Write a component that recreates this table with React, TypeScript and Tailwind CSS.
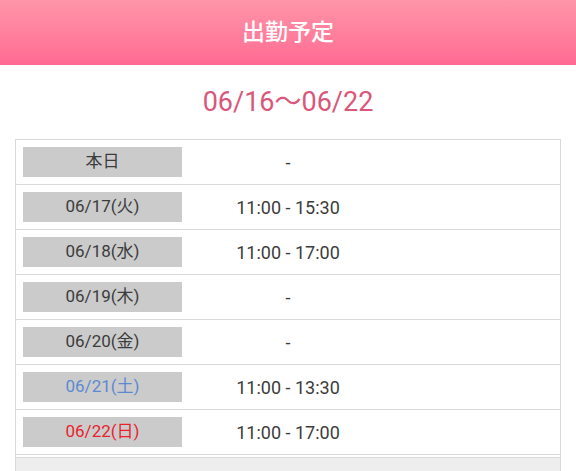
const rows = [
  { label: '本日', time: '-', tone: 'text-[#3c3c3c]' },
  { label: '06/17(火)', time: '11:00 - 15:30', tone: 'text-[#3c3c3c]' },
  { label: '06/18(水)', time: '11:00 - 17:00', tone: 'text-[#3c3c3c]' },
  { label: '06/19(木)', time: '-', tone: 'text-[#3c3c3c]' },
  { label: '06/20(金)', time: '-', tone: 'text-[#3c3c3c]' },
  { label: '06/21(土)', time: '11:00 - 13:30', tone: 'text-[#5b8ad0]' },
  { label: '06/22(日)', time: '11:00 - 17:00', tone: 'text-[#e8232f]' },
];

export default function App() {
  return (
    <div className="h-[471px] w-[576px] overflow-hidden bg-white font-['Roboto','Noto_Sans_CJK_JP',sans-serif]">
      {/* header */}
      <div className="flex h-[65px] items-center justify-center bg-gradient-to-b from-[#fe95a8] to-[#ff6a93]">
        <h1 className="text-[23px] font-medium leading-none text-white">出勤予定</h1>
      </div>

      {/* week range */}
      <div className="flex h-[74px] items-center justify-center">
        <p className="text-[27px] leading-none text-[#da577b]">06/16〜06/22</p>
      </div>

      {/* schedule */}
      <div className="mx-[15px] border-x border-t border-[#d9d9d9]">
        {rows.map((row) => (
          <div key={row.label} className="flex h-[45px] items-center border-b border-[#d9d9d9]">
            <div
              className={`ml-[7px] flex h-[30px] w-[159px] items-center justify-center bg-[#cbcbcb] text-[17px] ${row.tone}`}
            >
              {row.label}
            </div>
            <div className="w-[212px] text-center text-[18px] text-[#3c3c3c]">{row.time}</div>
          </div>
        ))}
        <div className="mt-[2px] h-[20px] border-t border-[#d9d9d9] bg-[#eeeeee]" />
      </div>
    </div>
  );
}
